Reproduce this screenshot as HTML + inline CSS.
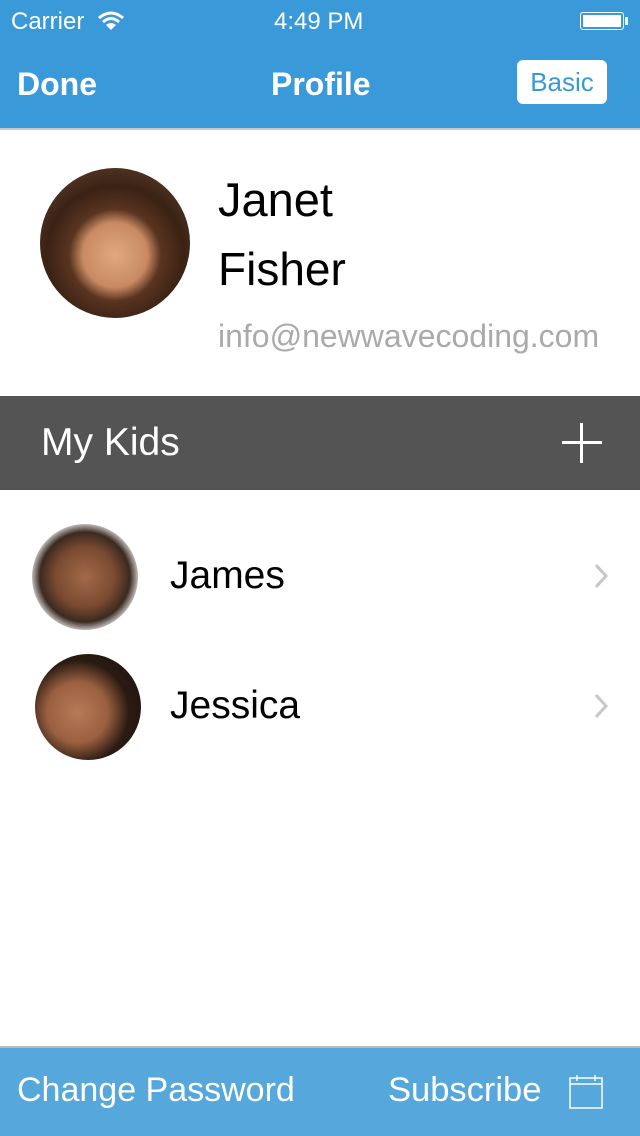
<!DOCTYPE html>
<html><head><meta charset="utf-8"><style>
*{margin:0;padding:0;box-sizing:border-box}
body{width:640px;height:1136px;position:relative;background:#fff;font-family:"Liberation Sans",sans-serif;overflow:hidden}
.a{position:absolute;white-space:nowrap}
</style></head><body>
<div class="a" style="left:0;top:0;width:640px;height:128px;background:#3a99d8"></div>
<div class="a" style="left:0;top:128px;width:640px;height:2px;background:#c8c8c8"></div>
<div class="a" style="left:11px;top:8px;font-size:24px;color:#fff">Carrier</div>
<svg class="a" style="left:97px;top:10px" width="28" height="22" viewBox="0 0 28 22"><path d="M2 8 Q14 -2 26 8" stroke="#fff" stroke-width="3" fill="none"/><path d="M6 12 Q14 5 22 12" stroke="#fff" stroke-width="3" fill="none"/><path d="M14 20 L9 15 Q14 11 19 15 Z" fill="#fff"/></svg>
<div class="a" style="left:274px;top:8px;font-size:24px;color:#fff">4:49 PM</div>
<div class="a" style="left:580px;top:12px;width:44px;height:18px;border:1px solid #fff;border-radius:3px;padding:2px"><div style="width:100%;height:100%;background:#fff"></div></div>
<div class="a" style="left:625px;top:17px;width:3px;height:8px;background:#fff"></div>
<div class="a" style="left:17px;top:66px;font-size:32px;color:#fff;font-weight:bold">Done</div>
<div class="a" style="left:271px;top:66px;font-size:32px;color:#fff;font-weight:bold">Profile</div>
<div class="a" style="left:517px;top:60px;width:90px;height:44px;background:#fff;border-radius:6px;color:#3a99d8;font-size:26px;text-align:center;line-height:44px">Basic</div>

<div class="a" style="left:40px;top:168px;width:150px;height:150px;border-radius:50%;background:radial-gradient(circle at 50% 58%,#e0a880 0,#c98a63 28%,#5a3420 40%,#3a2214 60%,#6b4a35 100%)"></div>
<div class="a" style="left:218px;top:172px;font-size:47px;color:#000">Janet</div>
<div class="a" style="left:218px;top:242px;font-size:46px;color:#000">Fisher</div>
<div class="a" style="left:218px;top:318px;font-size:32px;color:#aaa">info@newwavecoding.com</div>

<div class="a" style="left:0;top:396px;width:640px;height:94px;background:#545454"></div>
<div class="a" style="left:41px;top:421px;font-size:39px;color:#fff">My Kids</div>
<div class="a" style="left:562px;top:441px;width:40px;height:3px;background:#fff"></div>
<div class="a" style="left:580px;top:423px;width:3px;height:40px;background:#fff"></div>

<div class="a" style="left:32px;top:524px;width:106px;height:106px;border-radius:50%;background:radial-gradient(circle at 50% 50%,#a26a48 0,#7a4a30 40%,#3a2a20 60%,#f3f3f3 75%)"></div>
<div class="a" style="left:170px;top:554px;font-size:39px;color:#000">James</div>
<svg class="a" style="left:593px;top:562px" width="16" height="28"><path d="M3 3 L13 14 L3 25" stroke="#c7c7cc" stroke-width="3" fill="none"/></svg>
<div class="a" style="left:35px;top:654px;width:106px;height:106px;border-radius:50%;background:radial-gradient(circle at 40% 55%,#b87a58 0,#9a6040 35%,#2a1a12 60%,#1a120c 100%)"></div>
<div class="a" style="left:170px;top:684px;font-size:39px;color:#000">Jessica</div>
<svg class="a" style="left:593px;top:692px" width="16" height="28"><path d="M3 3 L13 14 L3 25" stroke="#c7c7cc" stroke-width="3" fill="none"/></svg>

<div class="a" style="left:0;top:1046px;width:640px;height:2px;background:#bbb"></div>
<div class="a" style="left:0;top:1048px;width:640px;height:88px;background:#55a7dc"></div>
<div class="a" style="left:17px;top:1071px;font-size:34px;color:#fff">Change Password</div>
<div class="a" style="left:388px;top:1071px;font-size:34.5px;color:#fff">Subscribe</div>
<svg class="a" style="left:568px;top:1074px" width="36" height="36" viewBox="0 0 36 36"><rect x="2" y="4" width="32" height="30" fill="none" stroke="#fff" stroke-width="1.5"/><line x1="2" y1="10" x2="34" y2="10" stroke="#fff" stroke-width="1.5"/><line x1="9" y1="1" x2="9" y2="7" stroke="#fff" stroke-width="1.5"/><line x1="27" y1="1" x2="27" y2="7" stroke="#fff" stroke-width="1.5"/></svg>
</body></html>
